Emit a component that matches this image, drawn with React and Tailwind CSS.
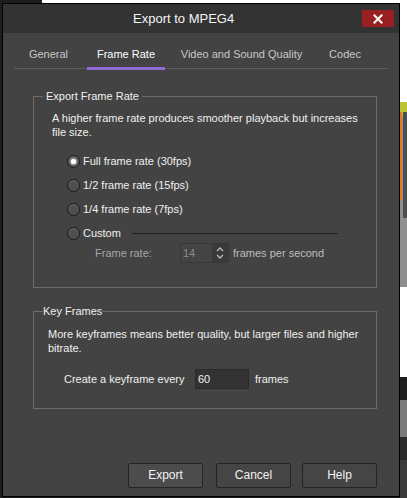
import React from "react";

function Radio({ checked, label }) {
  return (
    <div className="flex items-center h-[24px] pl-[33px]">
      <div className="w-[13px] h-[13px] rounded-full border border-[#1a1a1a] bg-[#505050] flex items-center justify-center shadow-[inset_0_1px_1px_rgba(255,255,255,0.15)]">
        {checked && <div className="w-[5px] h-[5px] rounded-full bg-white shadow-[0_0_2px_1px_rgba(255,255,255,0.6)]" />}
      </div>
      <span className="ml-[3px] text-[#f0f0f0]">{label}</span>
    </div>
  );
}

function Btn({ children, primary, className = "" }) {
  return (
    <div
      className={
        "w-[75px] h-[25px] rounded-[2px] border border-[#242424] flex items-center justify-center text-[#f2f2f2] text-[12px] " +
        (primary ? "bg-[#4c4c4c] " : "bg-[#454545] ") +
        className
      }
    >
      {children}
    </div>
  );
}

export default function App() {
  return (
    <div className="w-[407px] h-[498px] flex overflow-hidden font-['Liberation_Sans',Arial,sans-serif] text-[11px] leading-[13px] bg-[#1e1e1e]">
      {/* left strip */}
      <div className="w-[2px] h-full bg-[#1e1e1e]" />
      {/* middle */}
      <div className="w-[398px] h-full flex flex-col">
        <div className="h-[3px] flex">
          <div className="w-[40px] bg-[#1e1e1e]" />
          <div className="flex-1 bg-white" />
        </div>
        <div className="h-[494px] border border-black bg-[#434343] flex flex-col">
          {/* title bar */}
          <div className="h-[29px] bg-[#333333] flex items-center">
            <span className="pl-[130px] text-[13px] text-[#f4f4f4]">Export to MPEG4</span>
            <div className="ml-auto mr-[5px] w-[32px] h-[17px] bg-[#9a1f22] flex items-center justify-center">
              <svg width="10" height="10" viewBox="0 0 10 10">
                <path d="M1.5 1.5 L8.5 8.5 M8.5 1.5 L1.5 8.5" stroke="#f4f4f4" strokeWidth="2.2" strokeLinecap="square" />
              </svg>
            </div>
          </div>
          {/* tabs */}
          <div className="ml-[11px] w-[374px] h-[36px] border-b border-[#5c5c5c] flex items-end text-[#c8c8c8]">
            <div className="ml-[5px] w-[59px] flex justify-center pb-[7px]">General</div>
            <div className="ml-[9px] w-[78px] flex justify-center pb-[7px] text-white relative">
              Frame Rate
              <div className="absolute left-0 right-0 bottom-[-2px] h-[3px] bg-[#8e6bd4]" />
            </div>
            <div className="ml-[7px] w-[139px] flex justify-center pb-[7px]">Video and Sound Quality</div>
            <div className="ml-[8px] w-[52px] flex justify-center pb-[7px]">Codec</div>
          </div>

          {/* group 1 */}
          <fieldset className="ml-[30px] mt-[21px] w-[344px] border border-[#6c6c6c] pb-[24px]">
            <legend className="ml-[9px] px-[3px] text-[#f0f0f0]">Export Frame Rate</legend>
            <p className="pl-[18px] pt-[8px] leading-[14px] text-[#f0f0f0]">
              A higher frame rate produces smoother playback but increases
              <br />
              file size.
            </p>
            <div className="mt-[10px]">
              <Radio checked label="Full frame rate (30fps)" />
              <Radio label="1/2 frame rate (15fps)" />
              <Radio label="1/4 frame rate (7fps)" />
              <div className="flex items-center h-[24px]">
                <div className="pl-[33px] flex items-center">
                  <div className="w-[13px] h-[13px] rounded-full border border-[#1a1a1a] bg-[#505050] shadow-[inset_0_1px_1px_rgba(255,255,255,0.15)]" />
                  <span className="ml-[3px] text-[#f0f0f0]">Custom</span>
                </div>
                <div className="flex-1 ml-[11px] mr-[38px] h-[1px] bg-[#222222]" />
              </div>
            </div>
            <div className="flex items-center h-[20px] -mt-[2px] pl-[61px]">
              <span className="w-[85px] text-[#a6a6a6]">Frame rate:</span>
              <div className="w-[49px] h-[20px] border border-[#383838] bg-[#444444] flex items-stretch">
                <span className="flex-1 pl-[2px] flex items-center text-[#8a8a8a]">14</span>
                <div className="w-[16px] bg-[#3a3a3a] flex flex-col items-center justify-center gap-[2px]">
                  <svg width="8" height="5" viewBox="0 0 8 5">
                    <path d="M1 4 L4 1 L7 4" stroke="#bdbdbd" strokeWidth="1.3" fill="none" />
                  </svg>
                  <svg width="8" height="5" viewBox="0 0 8 5">
                    <path d="M1 1 L4 4 L7 1" stroke="#bdbdbd" strokeWidth="1.3" fill="none" />
                  </svg>
                </div>
              </div>
              <span className="ml-[4px] text-[#bdbdbd]">frames per second</span>
            </div>
          </fieldset>

          {/* group 2 */}
          <fieldset className="ml-[30px] mt-[17px] w-[344px] border border-[#6c6c6c] pb-[19px]">
            <legend className="ml-[9px] text-[#f0f0f0]">Key Frames</legend>
            <p className="pl-[14px] pt-[9px] leading-[14px] text-[#f0f0f0]">
              More keyframes means better quality, but larger files and higher
              <br />
              bitrate.
            </p>
            <div className="flex items-center h-[20px] mt-[14px] pl-[30px]">
              <span className="w-[131px] text-[#f0f0f0]">Create a keyframe every</span>
              <div className="w-[54px] h-[20px] border border-[#2a2a2a] bg-[#333333] flex items-center pl-[2px] text-[#f0f0f0]">60</div>
              <span className="ml-[6px] text-[#f0f0f0]">frames</span>
            </div>
          </fieldset>

          {/* buttons */}
          <div className="mt-auto mb-[8px] flex">
            <Btn primary className="ml-[125px]">Export</Btn>
            <Btn className="ml-[13px]">Cancel</Btn>
            <Btn className="ml-[11px]">Help</Btn>
          </div>
        </div>
        <div className="flex-1 bg-[#1e1e1e]" />
      </div>
      {/* right strip */}
      <div className="w-[7px] h-full flex flex-col">
        <div className="h-[102px] bg-white" />
        <div className="h-[185px] bg-[#8f8f8f] relative overflow-hidden">
          <div className="absolute left-0 top-0 w-full h-[14px] bg-[#b9c430]" />
          <div className="absolute left-0 top-[10px] w-[2px] h-[88px] bg-[#e07a1c]" />
          <div className="absolute left-[3px] top-[10px] w-[4px] h-[106px] bg-[#4e4e4e]" />
        </div>
        <div className="h-[90px] bg-white" />
        <div className="h-[23px] bg-[#1f1f1f]" />
        <div className="h-[37px] bg-[#7a7a7a]" />
        <div className="h-[23px] bg-[#2a2a2a]" />
        <div className="flex-1 bg-[#3a3a3a]" />
      </div>
    </div>
  );
}
